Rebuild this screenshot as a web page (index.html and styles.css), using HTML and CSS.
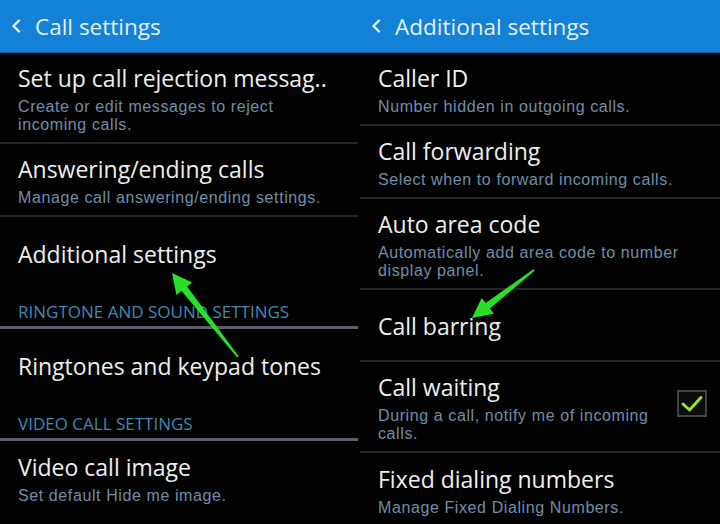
FILE: index.html
```html
<!DOCTYPE html>
<html lang="en">
<head>
    <meta charset="UTF-8">
    <meta name="viewport" content="width=device-width, initial-scale=1.0">
    <title>Call settings</title>
    <link rel="stylesheet" href="styles.css">
</head>
<body>
    <div id="main">
        <!-- Left screen: call settings -->
        <div class="panel">
            <div class="bar">
                <svg class="back" width="10" height="14" viewBox="0 0 10 14"><polyline points="8,1.5 2.5,7 8,12.5" /></svg>
                <h1>Call settings</h1>
            </div>
            <div class="list">
                <div class="item">
                    <h2>Set up call rejection messag..</h2>
                    <p>Create or edit messages to reject<br>incoming calls.</p>
                </div>
                <div class="item">
                    <h2>Answering/ending calls</h2>
                    <p>Manage call answering/ending settings.</p>
                </div>
                <div class="item last">
                    <h2>Additional settings</h2>
                </div>
                <div class="section">Ringtone and sound settings</div>
                <div class="item last">
                    <h2>Ringtones and keypad tones</h2>
                </div>
                <div class="section">Video call settings</div>
                <div class="item last">
                    <h2>Video call image</h2>
                    <p>Set default Hide me image.</p>
                </div>
            </div>
        </div>

        <!-- Right screen: additional settings -->
        <div class="panel">
            <div class="bar">
                <svg class="back" width="10" height="14" viewBox="0 0 10 14"><polyline points="8,1.5 2.5,7 8,12.5" /></svg>
                <h1>Additional settings</h1>
            </div>
            <div class="list">
                <div class="item">
                    <h2>Caller ID</h2>
                    <p>Number hidden in outgoing calls.</p>
                </div>
                <div class="item">
                    <h2>Call forwarding</h2>
                    <p>Select when to forward incoming calls.</p>
                </div>
                <div class="item">
                    <h2>Auto area code</h2>
                    <p>Automatically add area code to number<br>display panel.</p>
                </div>
                <div class="item">
                    <h2>Call barring</h2>
                </div>
                <div class="item row">
                    <div class="text">
                        <h2>Call waiting</h2>
                        <p>During a call, notify me of incoming<br>calls.</p>
                    </div>
                    <div class="check">
                        <svg width="24" height="20" viewBox="0 0 24 20"><polyline points="3,10 9.5,16 21,3.5" /></svg>
                    </div>
                </div>
                <div class="item last">
                    <h2>Fixed dialing numbers</h2>
                    <p>Manage Fixed Dialing Numbers.</p>
                </div>
            </div>
        </div>

        <!-- pointers drawn over both screens -->
        <svg class="arrows" width="720" height="524" viewBox="0 0 720 524">
            <polygon points="172,273 192.2,282.5 187.1,286.5 238.8,356.4 237.2,357.6 181.6,290.9 176.4,294.9" />
            <polygon points="472,318 493.9,313.7 489.9,308.6 534.6,270.8 533.4,269.2 485.7,303 481.7,297.9" />
        </svg>
    </div>
</body>
</html>
```

FILE: styles.css
```css
* {
    margin: 0;
    padding: 0;
    box-sizing: border-box;
    font-family: "Open Sans", "Noto Sans", sans-serif;
}
html,body {
    width: 100%;
    height: 100%;
    background-color: #020202;
    overflow: hidden;
}
#main {
    position: relative;
    display: flex;
    width: 720px;
    height: 524px;
    overflow: hidden;
}
.panel {
    width: 360px;
    height: 100%;
    display: flex;
    flex-direction: column;
}
.panel:first-child .list {
    padding-right: 2px;
}
.bar {
    flex-shrink: 0;
    height: 53px;
    background-color: #1381d6;
    border-bottom: 1px solid #0c64a8;
    display: flex;
    align-items: center;
    padding-left: 11px;
    gap: 14px;
}
.back polyline {
    fill: none;
    stroke: #e4f0fa;
    stroke-width: 2.4;
    stroke-linecap: round;
    stroke-linejoin: round;
}
.bar h1 {
    font-size: 22.5px;
    font-weight: 400;
    color: #e4f0fa;
}
.list {
    flex-shrink: 0;
}
.item {
    min-height: 72px;
    padding: 10px 18px 8px;
    border-bottom: 2px solid #262626;
    display: flex;
    flex-direction: column;
    justify-content: center;
}
.item.last {
    border-bottom: none;
}
.item h2 {
    font-size: 23px;
    line-height: 30px;
    font-weight: 400;
    color: #eeeeee;
    white-space: nowrap;
}
.item p {
    margin-top: 5px;
    font-family: "Liberation Sans", Arial, sans-serif;
    font-size: 16px;
    line-height: 18px;
    color: #6f8ea9;
    letter-spacing: 0.6px;
    white-space: nowrap;
}
.item.row {
    flex-direction: row;
    align-items: center;
    justify-content: space-between;
}
.check {
    flex-shrink: 0;
    width: 30px;
    height: 27px;
    margin-top: -8px;
    margin-right: -5px;
    border: 2px solid #444;
    background-color: #0c0c0c;
    display: flex;
    align-items: center;
    justify-content: center;
}
.check polyline {
    fill: none;
    stroke: #9ee12b;
    stroke-width: 3;
    stroke-linecap: round;
    stroke-linejoin: round;
}
.section {
    padding: 13px 18px 4px;
    border-bottom: 3px solid #5a6068;
    font-size: 17px;
    line-height: 20px;
    color: #3f89b6;
    text-transform: uppercase;
}
.arrows {
    position: absolute;
    left: 0;
    top: 0;
    pointer-events: none;
}
.arrows polygon {
    fill: #26e02a;
}
```
